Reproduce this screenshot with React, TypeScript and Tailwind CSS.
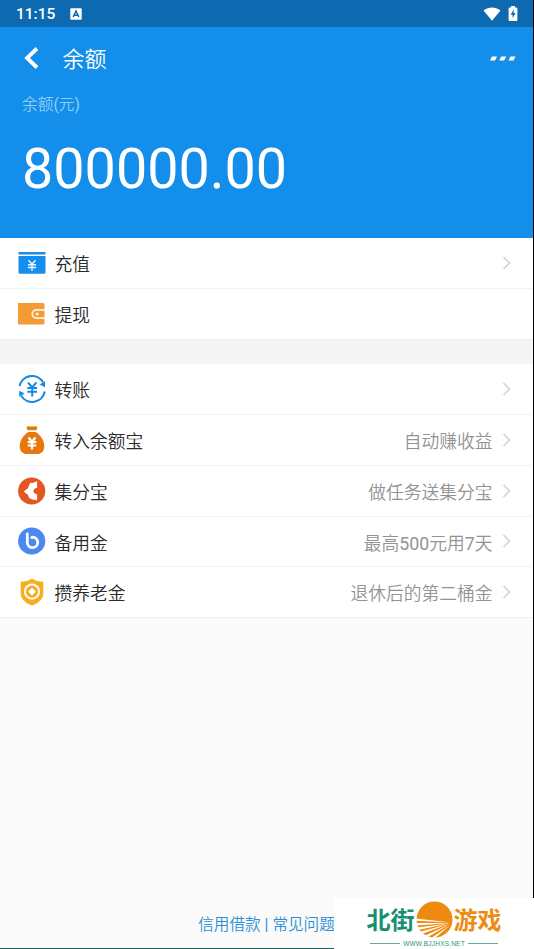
import type { ReactNode } from 'react';

interface RowProps {
  icon: ReactNode;
  label: string;
  hint?: ReactNode;
  arrow?: boolean;
  last?: boolean;
}

function RechargeIcon() {
  return (
    <svg className="w-7 h-7" viewBox="0 0 28 28" fill="none">
      <path d="M.5 3h27v2.500H.5zM.5 7h27v16.200a1.500 1.500 0 0 1-1.500 1.500H2a1.500 1.500 0 0 1-1.500-1.500z" fill="#158eed" />
      <path d="M10.500 11.200l3.500 4 3.500-4M14 15v6.800M10 15.800h8M10 18.600h8" stroke="#e5f7ff" strokeWidth="1.500" />
    </svg>
  );
}

function WalletIcon() {
  return (
    <svg className="w-7 h-7" viewBox="0 0 28 28" fill="none">
      <path d="M0 3h25a1.500 1.500 0 0 1 1.500 1.500v19a1 1 0 0 1-1 1H1a1 1 0 0 1-1-1z" fill="#f49b35" />
      <path d="M27 9.800h-8.500a4.200 4.200 0 0 0 0 8.400H27" stroke="#fff3dd" strokeWidth="1.700" />
      <circle cx="19.200" cy="14" r="1.500" fill="#fff3dd" />
    </svg>
  );
}

function TransferIcon() {
  return (
    <svg className="w-7 h-7" viewBox="0 0 28 28" fill="none">
      <path d="M1.500 11A12.800 12.800 0 0 1 25 7.200M26.700 16.500A12.800 12.800 0 0 1 3.200 20.800" stroke="#178be2" strokeWidth="2.100" />
      <path d="M27 6.200v6l-5.500-2.600zM1.200 21.800v-6l5.500 2.600z" fill="#178be2" />
      <path d="M10 7.500l4.200 5 4.200-5M14.200 12v9.500M9.300 13h9.800M9.300 16.800h9.800" stroke="#178be2" strokeWidth="2" />
    </svg>
  );
}

function MoneyBagIcon() {
  return (
    <svg className="w-7 h-7" viewBox="0 0 28 28" fill="none">
      <path d="M9.500.3c3 .4 6.200.4 9 0 1.500.8.800 3.300-.7 4h-7.600c-1.600-.7-2.200-3.200-.7-4z" fill="#e6790e" />
      <path d="M10.500 6h7C22 8.500 26.300 14 26.300 20.500c0 5.500-4 7.700-8.300 7.700h-8c-4.300 0-8.300-2.200-8.300-7.700C1.700 14 6 8.500 10.500 6z" fill="#e6790e" />
      <path d="M10.600 11.500l3.400 4.300 3.400-4.300M14 15.500v8M9.700 16.200h8.600M9.700 19.500h8.600" stroke="#fff" strokeWidth="2.200" />
    </svg>
  );
}

function PointsIcon() {
  return (
    <svg className="w-7 h-7" viewBox="0 0 28 28">
      <circle cx="13.700" cy="14" r="13.600" fill="#e45722" />
      <path d="M12.300 5.800l2.200.3 4.600-1.900v6.600l-1.600.4c-2.700 1-2.700 4.600 0 5.600l1.600.7v5.700l-4.500-.8-3.300-1.200-1.400-3.300-4.100-3.400 4.100-3.300z" fill="#fff" />
    </svg>
  );
}

function ReserveIcon() {
  return (
    <svg className="w-7 h-7" viewBox="0 0 28 28" fill="none">
      <circle cx="13.700" cy="14" r="13.600" fill="#4b88f2" />
      <path d="M9.300 6.800v8.700a5.200 5.200 0 1 0 5.200-5.300" stroke="#fff" strokeWidth="2.800" strokeLinecap="round" />
      <circle cx="14" cy="10.500" r="1.600" fill="#fff" />
    </svg>
  );
}

function PensionIcon() {
  return (
    <svg className="w-7 h-7" viewBox="0 0 28 28" fill="none">
      <path d="M14 .5c3.500 2.300 7 3.200 11.300 3.300V15c0 6-4.500 10-11.300 12.600C7.200 25 2.700 21 2.700 15V3.800C7 3.700 10.500 2.800 14 .5z" fill="#f8ae20" />
      <circle cx="14" cy="13.600" r="7.100" stroke="#fff" strokeWidth="2" />
      <path d="M14 9.800l3.800 3.800-3.800 3.800-3.800-3.800z" fill="#fff" />
    </svg>
  );
}

function StatusBar() {
  return (
    <div className="h-[27px] shrink-0 bg-[#0d6ab0] flex items-center pl-4 pr-[15px] text-white">
      <span className="text-[15.500px] font-medium leading-none pt-[3px]">11:15</span>
      <svg className="ml-[15px] w-3 h-3" viewBox="0 0 12 12" fill="none">
        <rect x=".3" y=".3" width="11.400" height="11.400" rx="1" fill="#fff" />
        <path d="M3.200 9L6 3l2.800 6M4.300 7.300h3.400" stroke="#0d6ab0" strokeWidth="1.500" />
      </svg>
      <svg className="ml-auto w-[18px] h-[14px]" viewBox="0 0 18 14">
        <path d="M.5 3.600C5.500-.7 12.500-.7 17.500 3.600L9 13.800z" fill="#fff" />
      </svg>
      <svg className="ml-[7px] mb-px w-[10px] h-[15px]" viewBox="0 0 10 15">
        <path d="M3 0h4v1.500h1.200a1.200 1.200 0 0 1 1.200 1.200V14a1 1 0 0 1-1 1H1.600a1 1 0 0 1-1-1V2.700a1.200 1.200 0 0 1 1.200-1.200H3z" fill="#fff" />
        <path d="M5.700 3.500L2.600 8.700h2v3.500l3-5.200h-2z" fill="#0d6ab0" />
      </svg>
    </div>
  );
}

function Header() {
  return (
    <header className="h-[211px] shrink-0 bg-[#138eea] text-white">
      <div className="h-[62px] flex items-center pl-6 pr-[17px]">
        <svg className="w-[15px] h-[22px]" viewBox="0 0 15 22" fill="none">
          <path d="M13 1.500L3 11l10 9.500" stroke="#fff" strokeWidth="3.800" />
        </svg>
        <h1 className="ml-[23.500px] text-[22px] font-[350] leading-8 pt-[3px]">余额</h1>
        <svg className="ml-auto w-[27px] h-[5px]" viewBox="0 0 27 5" fill="#fff">
          <path d="M3 .5h5L6 4.500H1zM12.200.5h5l-2 4h-5zM21.500.5h5l-2 4h-5z" />
        </svg>
      </div>
      <p className="pl-[22px] pt-1 text-[15.700px] font-[350] leading-6 text-[#8fd0f9]">
        余额<span className="font-normal">(</span>元<span className="font-normal">)</span>
      </p>
      <p className="pl-[22px] mt-[19px] text-[55.700px] leading-[66px]">800000.00</p>
    </header>
  );
}

function Row({ icon, label, hint, arrow = true, last = false }: RowProps) {
  return (
    <div className={`h-[50.800px] flex items-center pl-[18px] pr-[22px] bg-white border-b ${last ? 'border-[#efefef]' : 'border-[#f3f3f3]'}`}>
      {icon}
      <span className="ml-[8.500px] pt-[5px] text-[17.750px] font-[350] text-[#2a2a2a]">{label}</span>
      <span className="ml-auto pt-[5px] text-[17.750px] font-[350] text-[#939393]">{hint}</span>
      {arrow && (
        <svg className="ml-[9.500px] w-[9px] h-[14px]" viewBox="0 0 9 14" fill="none">
          <path d="M1.500 1l6 6-6 6" stroke="#d0d0d0" strokeWidth="1.500" />
        </svg>
      )}
    </div>
  );
}

function Watermark() {
  return (
    <div className="absolute left-[334px] top-[898px] w-[200px] h-[51px] bg-white flex flex-col items-center">
      <div className="h-[42px] shrink-0 flex items-center text-[24px] font-bold leading-none">
        <span className="pt-[3px] text-[#169071]">北街</span>
        <svg className="mx-px w-[37px] h-[37px]" viewBox="0 0 37 37" fill="none">
          <circle cx="18.500" cy="18.500" r="18" fill="#ee8a10" />
          {/* field furrows fanning out from the right edge */}
          <path d="M35 21.500L0 17.500v2.300zM34 22L0 22v2.500zM33 22.500L1 26.500l1 2.500zM33 23L3 31l2 2.300zM33.500 23.500L8 35l2.500 1.800zM34.500 24L16 36.500l3 .5z" fill="#fff" />
        </svg>
        <span className="pt-[3px] text-[#ee8a10]">游戏</span>
      </div>
      <div className="flex items-center gap-[3px] text-[#279578]">
        <span className="w-[30px] h-px bg-[#65ac99]" />
        <span className="text-[6.500px] leading-[7px] tracking-[0.200px] font-['Liberation_Sans',sans-serif]">WWW.BJJHXS.NET</span>
        <span className="w-[30px] h-px bg-[#65ac99]" />
      </div>
    </div>
  );
}

export default function App() {
  return (
    <div className="relative w-[534px] h-[949px] overflow-hidden bg-[#fafafa] font-['Roboto','Noto_Sans_CJK_SC',sans-serif]">
      <div className="h-full flex flex-col border-r border-b border-r-black border-b-[#255c57]">
        <StatusBar />
        <Header />

        <section className="shrink-0">
          <Row icon={<RechargeIcon />} label="充值" />
          <Row icon={<WalletIcon />} label="提现" arrow={false} last />
        </section>

        <div className="h-[24.600px] shrink-0 bg-[#f5f5f5]" />

        <section className="shrink-0">
          <Row icon={<TransferIcon />} label="转账" />
          <Row icon={<MoneyBagIcon />} label="转入余额宝" hint="自动赚收益" />
          <Row icon={<PointsIcon />} label="集分宝" hint="做任务送集分宝" />
          <Row
            icon={<ReserveIcon />}
            label="备用金"
            hint={<>最高<span className="font-normal">500</span>元用<span className="font-normal">7</span>天</>}
          />
          <Row icon={<PensionIcon />} label="攒养老金" hint="退休后的第二桶金" last />
        </section>

        <footer className="mt-auto pb-[11px] flex justify-center gap-1 text-[15.600px] font-[350] leading-6 text-[#2a90d6]">
          <span>信用借款</span>
          <span className="font-normal">|</span>
          <span>常见问题</span>
        </footer>
      </div>
      <Watermark />
    </div>
  );
}
